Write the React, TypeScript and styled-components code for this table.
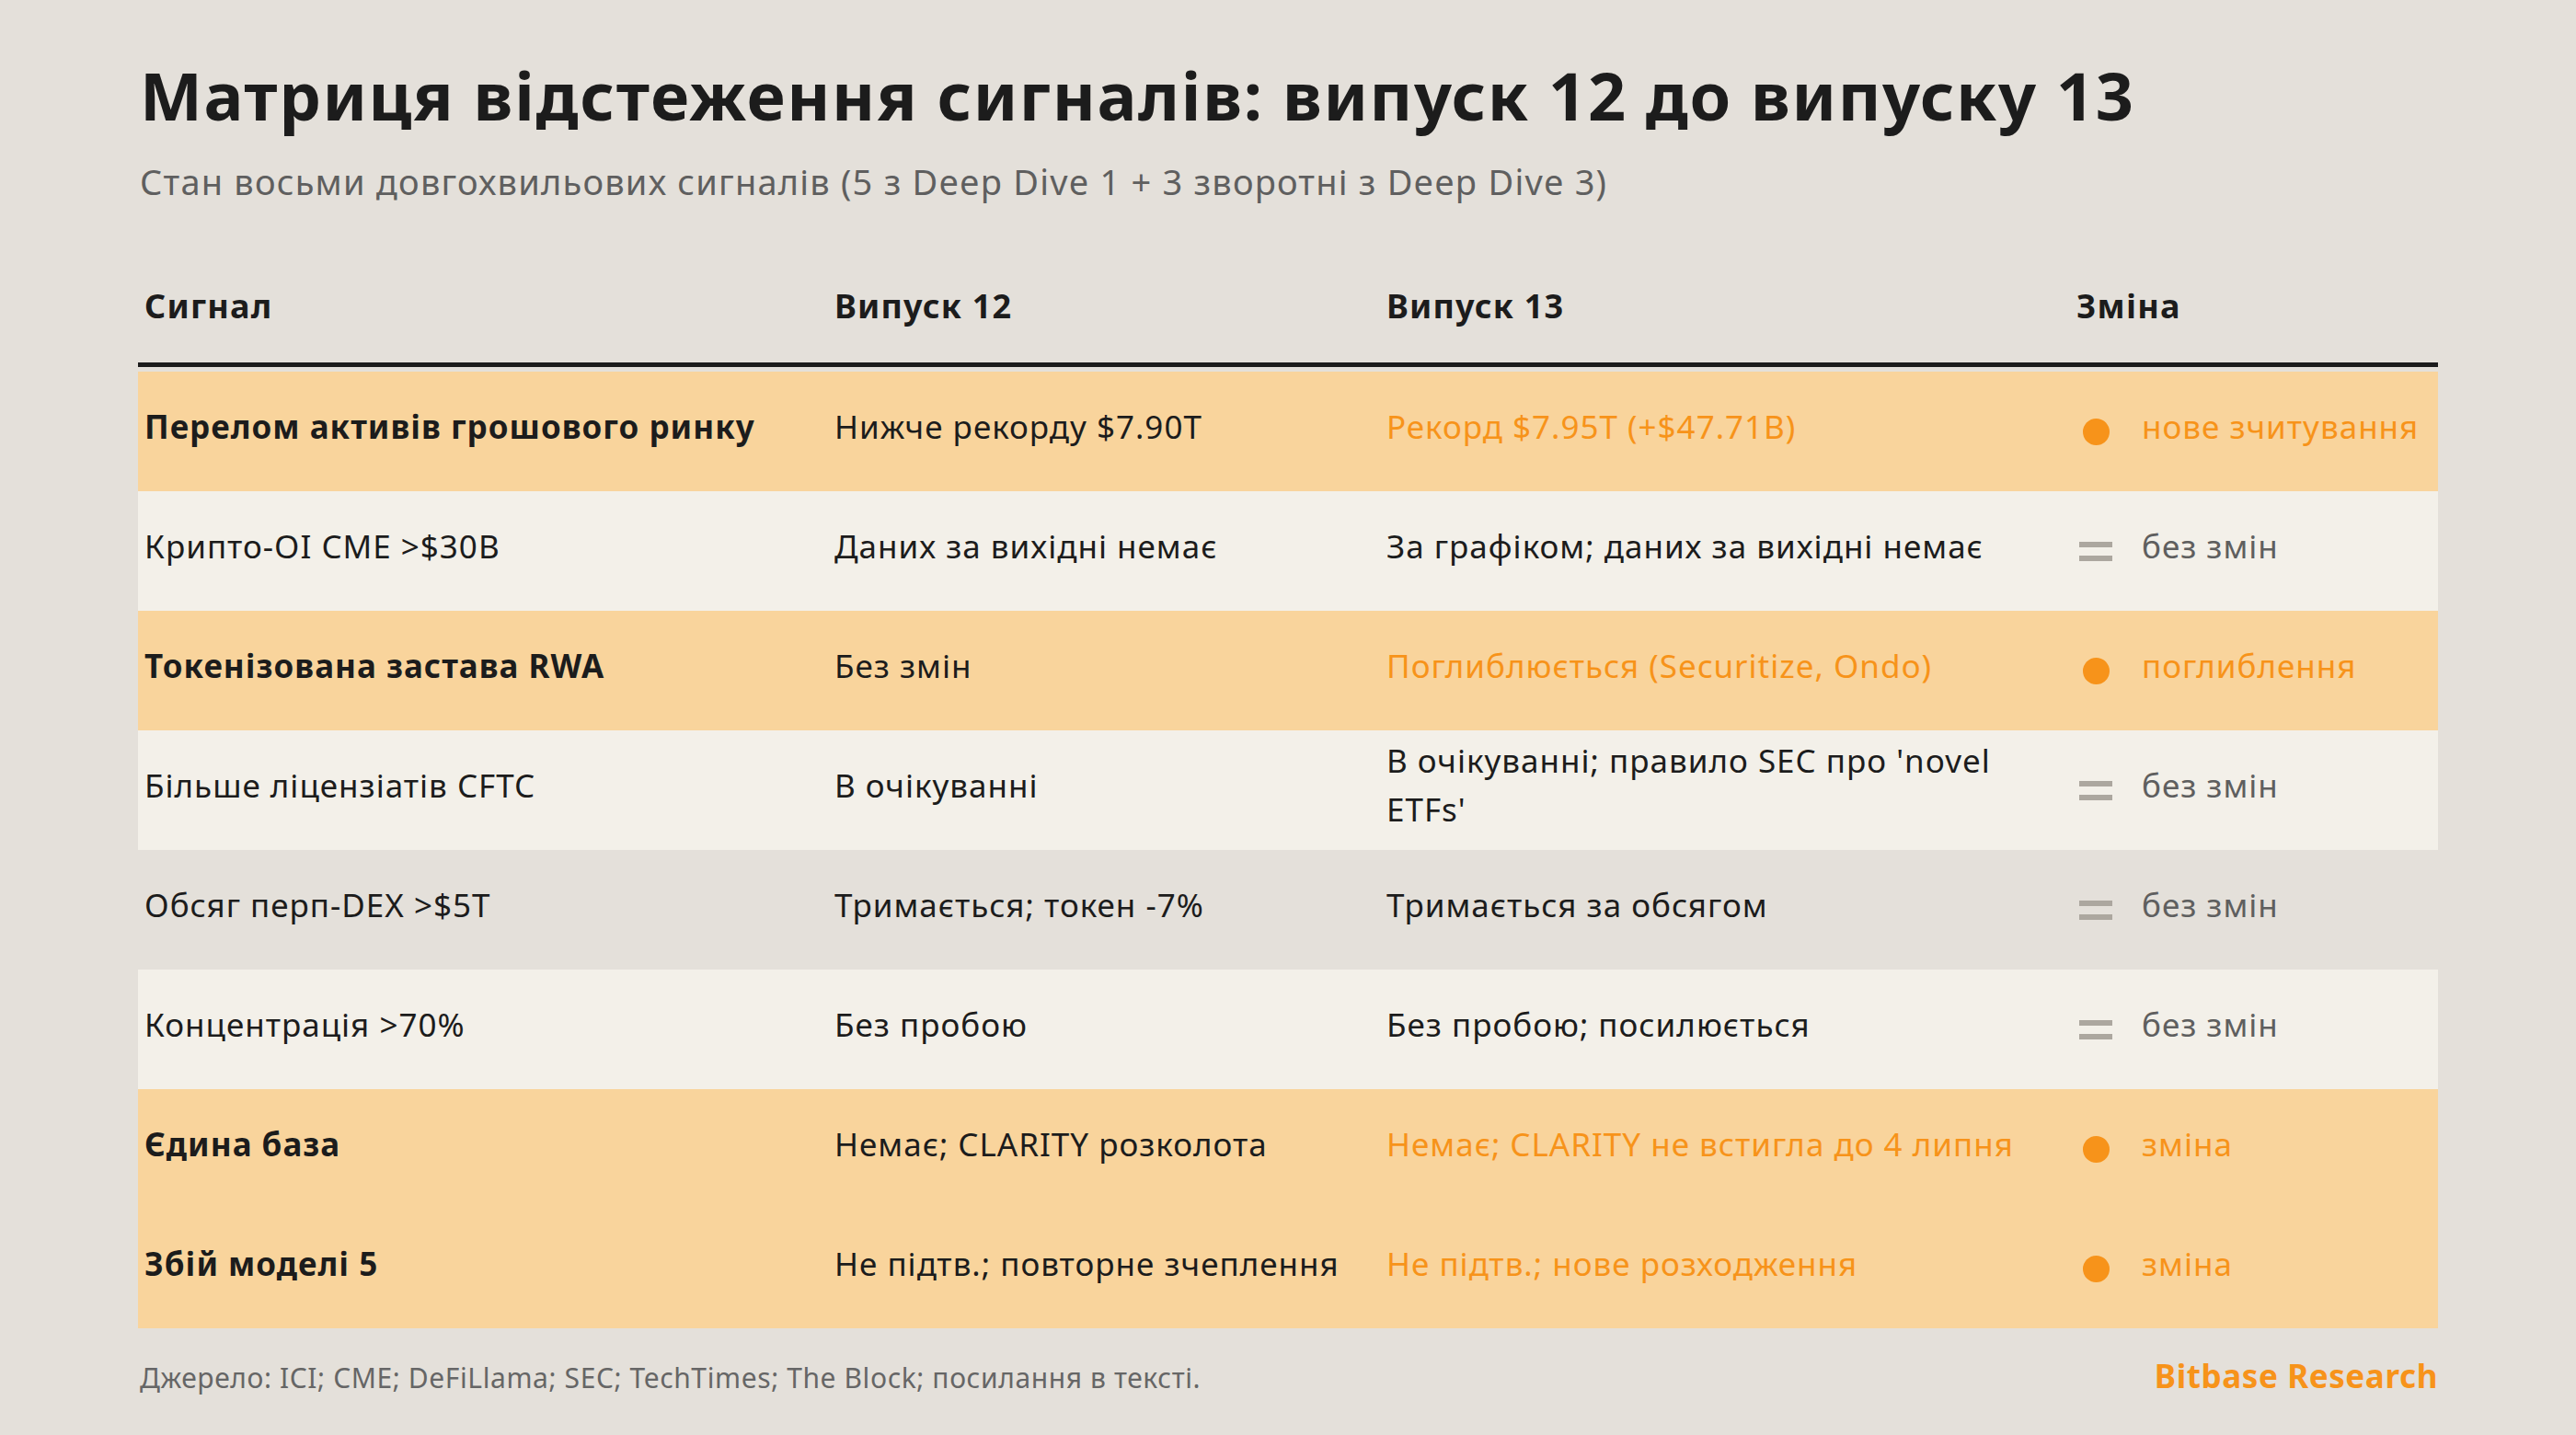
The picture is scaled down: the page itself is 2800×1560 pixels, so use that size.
import React from "react";
import styled, { createGlobalStyle } from "styled-components";

const GlobalStyle = createGlobalStyle`
  html, body {
    margin: 0;
    padding: 0;
    background: #e4e0da;
  }
  body {
    font-family: "Noto Sans", "Open Sans", sans-serif;
    color: #1c1c1c;
  }
`;

const Page = styled.div`
  width: 2800px;
  height: 1560px;
  box-sizing: border-box;
  padding: 60px 150px 0 150px;
  background: #e4e0da;
  display: flex;
  flex-direction: column;
`;

const Title = styled.h1`
  margin: 0 0 0 2px;
  font-size: 72px;
  line-height: 1.2;
  font-weight: 700;
  color: #1c1c1c;
  letter-spacing: 1.6px;
`;

const Subtitle = styled.p`
  margin: 29px 0 0 2px;
  font-size: 38px;
  line-height: 1.2;
  font-weight: 400;
  color: #5f5f5f;
  letter-spacing: 1.2px;
`;

const Table = styled.div`
  margin-top: 90px;
  width: 2500px;
  display: flex;
  flex-direction: column;
`;

const HeaderRow = styled.div`
  display: grid;
  grid-template-columns: 750px 600px 750px 400px;
  border-bottom: 5px solid #1c1c1c;
  padding-bottom: 40px;
  margin-bottom: 5px;
`;

const HeaderCell = styled.div`
  padding: 0 20px 0 7px;
  font-size: 36px;
  line-height: 1.2;
  font-weight: 700;
  color: #1c1c1c;
  letter-spacing: 1.2px;
`;

const Row = styled.div<{ $bg: string }>`
  display: grid;
  grid-template-columns: 750px 600px 750px 400px;
  height: 130px;
  background: ${(p) => p.$bg};
`;

const Cell = styled.div<{ $bold?: boolean; $accent?: boolean }>`
  display: flex;
  align-items: center;
  padding: 0 24px 12px 7px;
  font-size: 35px;
  line-height: 1.52;
  letter-spacing: 1px;
  font-weight: ${(p) => (p.$bold ? 700 : 400)};
  color: ${(p) => (p.$accent ? "#f7931a" : "#1c1c1c")};
`;

const ChangeCell = styled.div`
  display: flex;
  align-items: center;
  padding: 0 0 0 8px;
`;

const IconBox = styled.div`
  width: 40px;
  height: 40px;
  display: flex;
  flex-direction: column;
  align-items: center;
  justify-content: center;
  gap: 9px;
  margin-right: 30px;
  flex-shrink: 0;
`;

const Dot = styled.span`
  width: 29px;
  height: 29px;
  border-radius: 50%;
  background: #f7931a;
`;

const Bar = styled.span`
  width: 36px;
  height: 6px;
  background: #aca79f;
`;

const ChangeLabel = styled.span<{ $accent: boolean }>`
  font-size: 35px;
  line-height: 1.52;
  letter-spacing: 1px;
  padding-bottom: 12px;
  color: ${(p) => (p.$accent ? "#f7931a" : "#5f5f5f")};
`;

const Footer = styled.div`
  width: 2500px;
  margin-top: 28px;
  display: flex;
  justify-content: space-between;
  align-items: baseline;
`;

const Source = styled.span`
  font-size: 30px;
  color: #666;
  margin-left: 2px;
  letter-spacing: 0.6px;
`;

const Brand = styled.span`
  font-size: 35px;
  font-weight: 700;
  color: #f7931a;
  letter-spacing: 0.6px;
`;

type RowData = {
  signal: string;
  v12: string;
  v13: string;
  change: string;
  hot: boolean;
};

const rows: RowData[] = [
  {
    signal: "Перелом активів грошового ринку",
    v12: "Нижче рекорду $7.90T",
    v13: "Рекорд $7.95T (+$47.71B)",
    change: "нове зчитування",
    hot: true,
  },
  {
    signal: "Крипто-OI CME >$30B",
    v12: "Даних за вихідні немає",
    v13: "За графіком; даних за вихідні немає",
    change: "без змін",
    hot: false,
  },
  {
    signal: "Токенізована застава RWA",
    v12: "Без змін",
    v13: "Поглиблюється (Securitize, Ondo)",
    change: "поглиблення",
    hot: true,
  },
  {
    signal: "Більше ліцензіатів CFTC",
    v12: "В очікуванні",
    v13: "В очікуванні; правило SEC про 'novel ETFs'",
    change: "без змін",
    hot: false,
  },
  {
    signal: "Обсяг перп-DEX >$5T",
    v12: "Тримається; токен -7%",
    v13: "Тримається за обсягом",
    change: "без змін",
    hot: false,
  },
  {
    signal: "Концентрація >70%",
    v12: "Без пробою",
    v13: "Без пробою; посилюється",
    change: "без змін",
    hot: false,
  },
  {
    signal: "Єдина база",
    v12: "Немає; CLARITY розколота",
    v13: "Немає; CLARITY не встигла до 4 липня",
    change: "зміна",
    hot: true,
  },
  {
    signal: "Збій моделі 5",
    v12: "Не підтв.; повторне зчеплення",
    v13: "Не підтв.; нове розходження",
    change: "зміна",
    hot: true,
  },
];

function rowBg(i: number, hot: boolean): string {
  if (hot) return "#f9d49c";
  return i % 2 === 1 ? "#f3f0e9" : "transparent";
}

export default function App() {
  return (
    <>
      <GlobalStyle />
      <Page>
        <Title>Матриця відстеження сигналів: випуск 12 до випуску 13</Title>
        <Subtitle>
          Стан восьми довгохвильових сигналів (5 з Deep Dive 1 + 3 зворотні з Deep Dive 3)
        </Subtitle>
        <Table>
          <HeaderRow>
            <HeaderCell>Сигнал</HeaderCell>
            <HeaderCell>Випуск 12</HeaderCell>
            <HeaderCell>Випуск 13</HeaderCell>
            <HeaderCell>Зміна</HeaderCell>
          </HeaderRow>
          {rows.map((r, i) => (
            <Row key={i} $bg={rowBg(i, r.hot)}>
              <Cell $bold={r.hot}>{r.signal}</Cell>
              <Cell>{r.v12}</Cell>
              <Cell $accent={r.hot}>{r.v13}</Cell>
              <ChangeCell>
                <IconBox>
                  {r.hot ? (
                    <Dot />
                  ) : (
                    <>
                      <Bar />
                      <Bar />
                    </>
                  )}
                </IconBox>
                <ChangeLabel $accent={r.hot}>{r.change}</ChangeLabel>
              </ChangeCell>
            </Row>
          ))}
        </Table>
        <Footer>
          <Source>
            Джерело: ICI; CME; DeFiLlama; SEC; TechTimes; The Block; посилання в тексті.
          </Source>
          <Brand>Bitbase Research</Brand>
        </Footer>
      </Page>
    </>
  );
}
